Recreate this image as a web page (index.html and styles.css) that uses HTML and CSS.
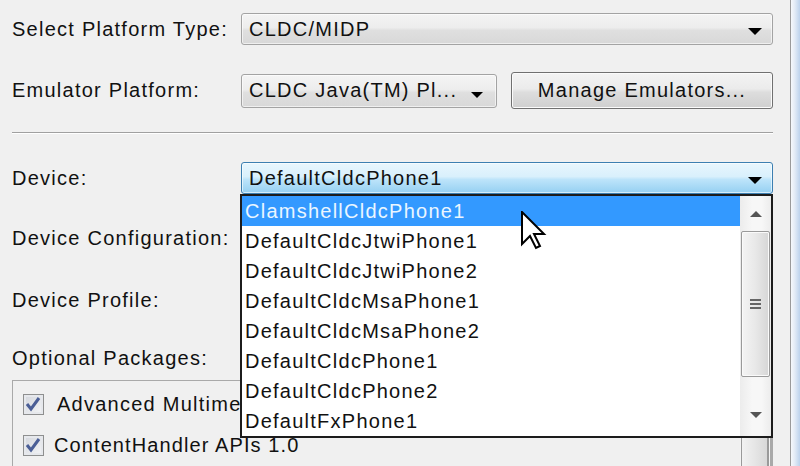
FILE: index.html
```html
<!DOCTYPE html>
<html lang="en">
<head>
    <meta charset="UTF-8">
    <title>Device Settings</title>
    <link rel="stylesheet" href="styles.css">
</head>
<body>
    <div class="window">
        <div class="panel">
            <div class="row r1">
                <span class="label">Select Platform Type:</span>
                <div class="combo wide"><span class="value">CLDC/MIDP</span><span class="arrow"></span></div>
            </div>
            <div class="row r2">
                <span class="label">Emulator Platform:</span>
                <div class="combo short"><span class="value">CLDC Java(TM) Pl...</span><span class="arrow"></span></div>
                <button class="btn">Manage Emulators...</button>
            </div>
            <div class="sep"></div>
            <div class="row r3">
                <span class="label">Device:</span>
                <div class="combo wide focus"><span class="value">DefaultCldcPhone1</span><span class="arrow"></span></div>
            </div>
            <div class="row r4">
                <span class="label">Device Configuration:</span>
                <div class="combo wide"><span class="value"></span><span class="arrow"></span></div>
            </div>
            <div class="row r5">
                <span class="label">Device Profile:</span>
                <div class="combo wide"><span class="value"></span><span class="arrow"></span></div>
            </div>
            <div class="row r6">
                <span class="label">Optional Packages:</span>
            </div>
            <div class="packages">
                <div class="pkg-list">
                    <div class="pkg"><span class="check"><svg width="20" height="20" viewBox="0 0 20 20"><path d="M4 10 L8 15 L16 4" fill="none" stroke="#4a5e96" stroke-width="3"/></svg></span><span class="pkg-name">Advanced Multime</span></div>
                    <div class="pkg pkg2"><span class="check"><svg width="20" height="20" viewBox="0 0 20 20"><path d="M4 10 L8 15 L16 4" fill="none" stroke="#4a5e96" stroke-width="3"/></svg></span><span class="pkg-name">ContentHandler APIs 1.0</span></div>
                </div>
                <div class="pkg-scroll"><div class="pkg-thumb"></div></div>
            </div>

            <div class="dropdown">
                <ul class="items">
                    <li class="selected">ClamshellCldcPhone1</li>
                    <li>DefaultCldcJtwiPhone1</li>
                    <li>DefaultCldcJtwiPhone2</li>
                    <li>DefaultCldcMsaPhone1</li>
                    <li>DefaultCldcMsaPhone2</li>
                    <li>DefaultCldcPhone1</li>
                    <li>DefaultCldcPhone2</li>
                    <li>DefaultFxPhone1</li>
                </ul>
                <div class="scrollbar">
                    <div class="sb-btn"><span class="sb-up"></span></div>
                    <div class="sb-thumb"><span class="grip"></span></div>
                    <div class="sb-space"></div>
                    <div class="sb-btn"><span class="sb-down"></span></div>
                </div>
            </div>

            <svg class="cursor" width="26" height="40" viewBox="0 0 13 20">
                <path d="M0.5 0.5 L0.5 16.5 L4.5 12.5 L7.5 18.5 L9.5 17.5 L6.5 11.5 L11.5 11.5 Z" fill="#fff" stroke="#000" stroke-width="1" stroke-linejoin="miter"/>
            </svg>
        </div>
        <div class="frame"></div>
    </div>
</body>
</html>
```
FILE: styles.css
```css
* {
    box-sizing: border-box;
}
body {
    margin: 0;
    width: 800px;
    height: 466px;
    overflow: hidden;
    background-color: #f0f0f0;
    font-family: "Liberation Sans", Arial, sans-serif;
    font-size: 20px;
    letter-spacing: 1.25px;
    color: #111111;
}
.window {
    display: flex;
    height: 466px;
}
.panel {
    position: relative;
    flex: 1;
    padding: 13px 17px 0 12px;
}
.frame {
    width: 10px;
    border-left: 1px solid #9a9a9a;
    background: linear-gradient(to right, #f6f8fb, #e4ecf6 40%, #bcd2ec);
}
.row {
    display: flex;
    align-items: center;
    height: 32px;
}
.label {
    flex: none;
    width: 229px;
    white-space: nowrap;
}
.r2 {
    margin-top: 27px;
    height: 37px;
}
.r3 {
    margin-top: 28px;
}
.r4 {
    margin-top: 28px;
}
.r5 {
    margin-top: 30px;
}
.r6 {
    margin-top: 30px;
    height: 24px;
}
.combo {
    display: flex;
    align-items: center;
    height: 32px;
    padding: 0 10px 0 7px;
    border: 1px solid #a3a3a3;
    border-radius: 3px;
    background: linear-gradient(#f4f4f4 0%, #ededed 45%, #dfdfdf 55%, #d8d8d8 100%);
    box-shadow: inset 0 0 0 1px rgba(255,255,255,0.6);
    white-space: nowrap;
}
.combo .value {
    flex: 1;
    overflow: hidden;
}
.wide {
    flex: 1;
}
.short {
    width: 256px;
    height: 34px;
    padding-right: 13px;
}
.focus {
    border-color: #3c7fb1;
    background: linear-gradient(#e8f6fd 0%, #d9f0fc 45%, #bde4fa 55%, #95d0f2 100%);
}
.arrow {
    flex: none;
    width: 0;
    height: 0;
    border-left: 7px solid transparent;
    border-right: 7px solid transparent;
    border-top: 7px solid #000;
    margin-top: 4px;
}
.short .arrow {
    border-left-width: 6px;
    border-right-width: 6px;
    border-top-width: 6px;
    margin-top: 8px;
}
.btn {
    flex: 1;
    height: 37px;
    margin-left: 14px;
    border: 1px solid #707070;
    border-radius: 3px;
    background: linear-gradient(#f3f3f3 0%, #ebebeb 45%, #dddddd 55%, #cfcfcf 100%);
    box-shadow: inset 0 0 0 1px #fbfbfb;
    font-family: inherit;
    font-size: 20px;
    letter-spacing: 1.25px;
    color: #111111;
    padding: 0 0 1px 0;
}
.sep {
    margin-top: 23px;
    border-top: 1px solid #a0a0a0;
    border-bottom: 1px solid #ffffff;
}
.packages {
    display: flex;
    margin-top: 10px;
    height: 100px;
    border: 1px solid #a9a9a9;
    border-right: 3px solid #a9a9a9;
}
.pkg-list {
    flex: 1;
    padding: 3px 0 0 10px;
}
.pkg {
    display: flex;
    align-items: center;
    height: 41px;
}
.pkg-name {
    white-space: nowrap;
}
.pkg2 {
    letter-spacing: 1.1px;
}
.check {
    flex: none;
    width: 21px;
    height: 21px;
    margin-right: 13px;
    border: 1px solid #8e8f8f;
    background: linear-gradient(135deg, #d3d6dc, #f4f5f7);
    box-shadow: inset 0 0 0 2px #e6e8ec;
}
.check svg {
    display: block;
    margin: -1px 0 0 -1px;
}
.pkg2 .check {
    margin-right: 10px;
}
.pkg-scroll {
    width: 30px;
    background: #f4f4f4;
    padding: 0 1px;
}
.pkg-thumb {
    height: 100%;
    border-left: 1px solid #9a9a9a;
    border-right: 2px solid #9a9a9a;
    background: linear-gradient(to right, #f2f2f2, #e6e6e6 50%, #d8d8d8);
}

/* drop-down list of the Device combo */
.dropdown {
    position: absolute;
    left: 240px;
    top: 194px;
    width: 533px;
    height: 244px;
    display: flex;
    border: 2px solid #1c1c1c;
    background: #ffffff;
}
.items {
    flex: 1;
    margin: 0;
    padding: 0;
    list-style: none;
}
.items li {
    height: 30px;
    line-height: 31px;
    padding-left: 3px;
    white-space: nowrap;
}
.items .selected {
    background-color: #3399ff;
    color: #eaf6ff;
}
.scrollbar {
    width: 31px;
    display: flex;
    flex-direction: column;
    background: linear-gradient(to right, #ececec, #f7f7f7 40%, #f7f7f7 70%, #ececec);
    padding: 0 1px;
}
.sb-btn {
    height: 35px;
    display: flex;
    align-items: center;
    justify-content: center;
}
.sb-up {
    width: 0;
    height: 0;
    border-left: 6px solid transparent;
    border-right: 6px solid transparent;
    border-bottom: 6px solid #555555;
}
.sb-down {
    width: 0;
    height: 0;
    border-left: 6px solid transparent;
    border-right: 6px solid transparent;
    border-top: 6px solid #555555;
    margin-top: -8px;
}
.sb-thumb {
    height: 146px;
    display: flex;
    align-items: center;
    justify-content: center;
    border: 1px solid #9a9a9a;
    border-radius: 2px;
    background: linear-gradient(to right, #f4f4f4, #e8e8e8 50%, #d6d6d6);
    box-shadow: inset 0 0 0 1px #fafafa;
}
.grip {
    width: 11px;
    height: 10px;
    background: repeating-linear-gradient(#666666 0 2px, transparent 2px 4px);
}
.sb-space {
    flex: 1;
}
.cursor {
    position: absolute;
    left: 521px;
    top: 211px;
}
```
